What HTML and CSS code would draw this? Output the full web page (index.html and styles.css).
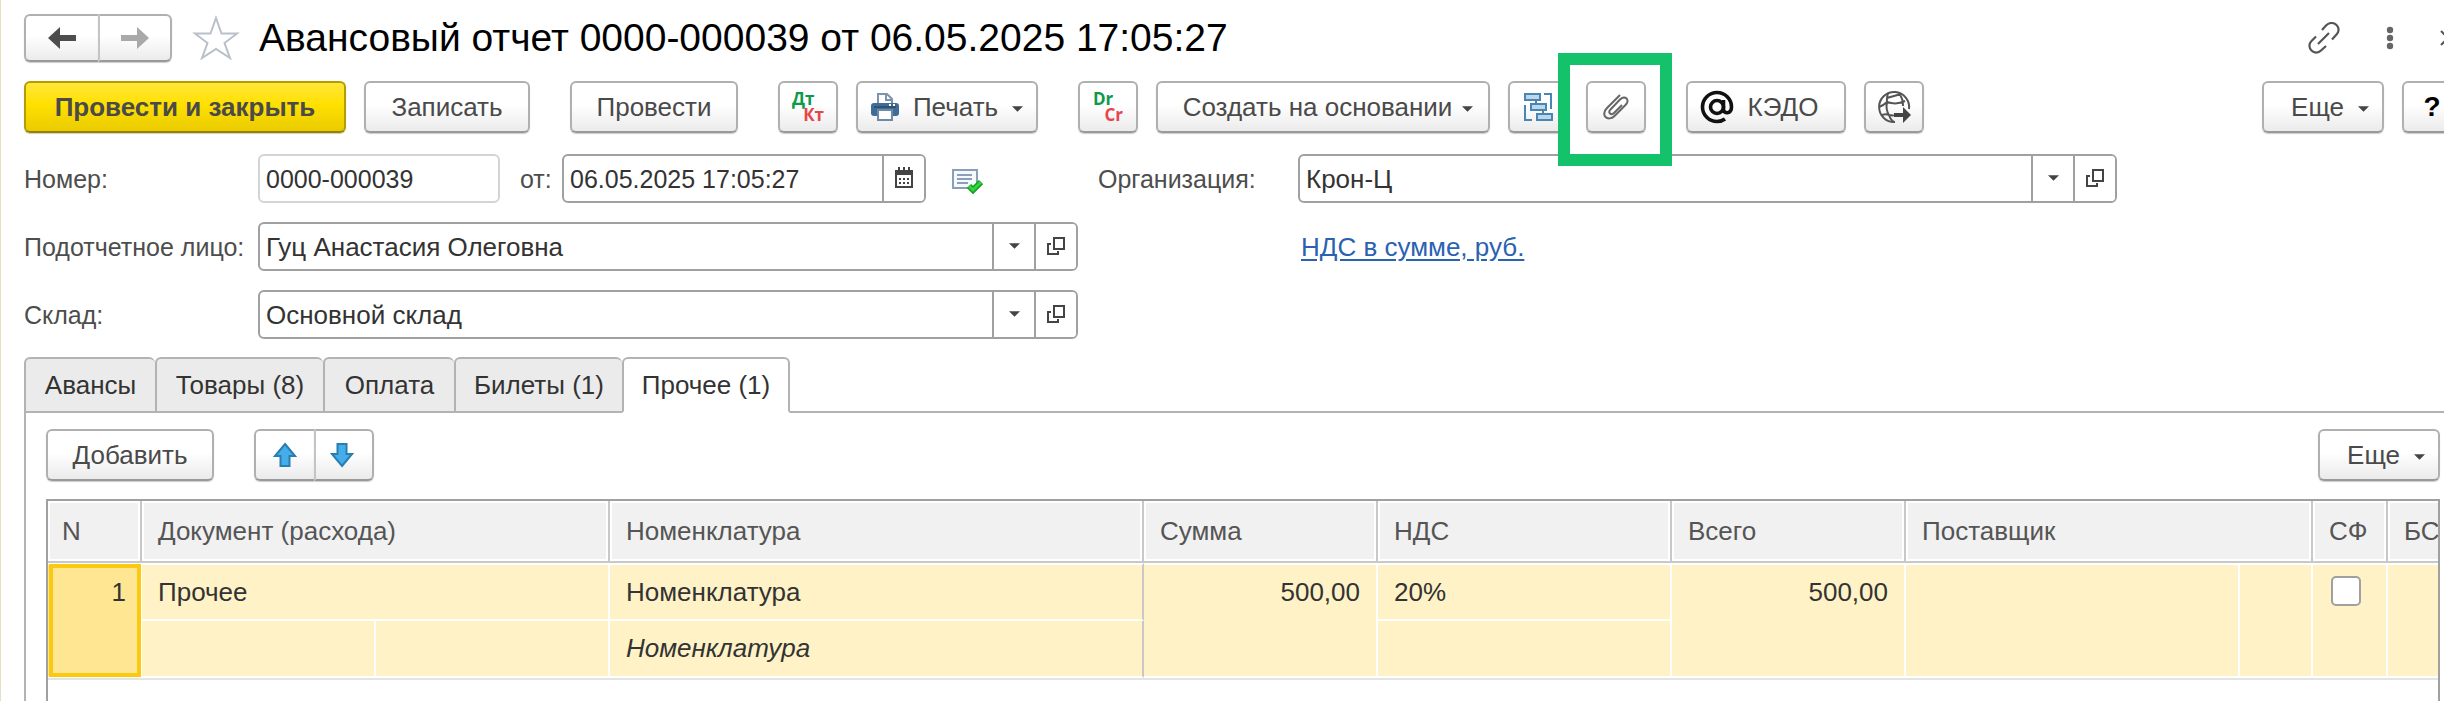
FILE: index.html
```html
<!DOCTYPE html>
<html lang="ru">
<head>
<meta charset="utf-8">
<title>Авансовый отчет</title>
<link rel="stylesheet" href="styles.css">
</head>
<body>
<svg class="defs" aria-hidden="true">
  <symbol id="open" viewBox="0 0 20 20"><path d="M8 2h10v11H8zM5 8H2v10h10v-3" fill="none" stroke="#444" stroke-width="2"/></symbol>
  <symbol id="caret" viewBox="0 0 12 6"><path d="M0 0h12L6 6z" fill="#444"/></symbol>
</svg>
<main class="window">
  <header class="titlebar">
    <div class="group nav">
      <button class="btn" aria-label="Назад"><svg width="28" height="22" viewBox="0 0 28 22"><path d="M0 11 12 0v8h16v6H12v8z" fill="#4d4d4d"/></svg></button>
      <button class="btn" aria-label="Вперед"><svg width="28" height="22" viewBox="0 0 28 22"><path d="M28 11 16 0v8H0v6h16v8z" fill="#a9a9a9"/></svg></button>
    </div>
    <button class="plain star" aria-label="Избранное"><svg width="48" height="46" viewBox="0 0 48 46"><path d="M24 3l5.500 15.500H45L32.500 28 38 43 24 34 10 43l5.500-15L3 18.500h15.500z" fill="#fff" stroke="#b9c0c8" stroke-width="2"/></svg></button>
    <h1>Авансовый отчет 0000-000039 от 06.05.2025 17:05:27</h1>
    <div class="winctl">
      <button class="plain" aria-label="Ссылка"><svg width="32" height="32" viewBox="0 0 32 32" fill="none" stroke="#555" stroke-width="2.200"><path d="M10 22 21 11M14 8l4-4.500c4-4 8.500-2.500 10.500-.500 3 3 2.500 7 0 9.500L24 17.500M8 14.500 3.500 19c-3 3-2.500 7 0 9.500s6.500 3 9.500 0L18 24"/></svg></button>
      <button class="plain" aria-label="Меню"><svg width="8" height="24" viewBox="0 0 8 24" fill="#666"><circle cx="4" cy="4" r="3.200"/><circle cx="4" cy="12" r="3.200"/><circle cx="4" cy="20" r="3.200"/></svg></button>
      <button class="plain" aria-label="Закрыть"><svg width="16" height="16" viewBox="0 0 16 16"><path d="M1 1l14 14M15 1 1 15" stroke="#555" stroke-width="2"/></svg></button>
    </div>
  </header>

  <div class="toolbar">
    <button class="btn primary">Провести и закрыть</button>
    <button class="btn write">Записать</button>
    <button class="btn post far">Провести</button>
    <button class="btn icon far"><span class="pair"><span class="dt">Дт</span><span class="kt">Кт</span></span></button>
    <button class="btn print"><svg width="28" height="28" viewBox="0 0 28 28"><path d="M7 12V1h9l5 5v6" fill="#fff" stroke="#7d93ac" stroke-width="2"/><path d="M15 1v6h6" fill="none" stroke="#7d93ac" stroke-width="2"/><rect y="10" width="28" height="13" rx="3" fill="#3f6d96"/><path d="M3 14h22" stroke="#2d5375" stroke-width="2"/><path d="M18 12h2M22 12h2" stroke="#fff" stroke-width="2"/><path d="M7 17h14v10H7z" fill="#fff" stroke="#6f8aa6" stroke-width="2"/></svg><span>Печать</span><svg class="caret" width="11" height="6"><use href="#caret"/></svg></button>
    <button class="btn icon far"><span class="pair latin"><span class="dt">Dr</span><span class="kt">Cr</span></span></button>
    <button class="btn create">Создать на основании<svg class="caret" width="11" height="6"><use href="#caret"/></svg></button>
    <button class="btn icon" aria-label="Структура подчиненности"><svg width="30" height="30" viewBox="0 0 30 30" fill="none" stroke="#4a86b4" stroke-width="2"><path d="M21 2h7v15M2 13v15h7" /><path d="M13 8v3M20 18v3"/><g fill="#bdd6e8"><path d="M2 2h15v6H2zM8 12h15v6H8zM14 22h15v6H14z"/></g></svg></button>
    <div class="marked"><button class="btn icon" aria-label="Присоединенные файлы"><svg width="26" height="28" viewBox="0 0 26 28" fill="none" stroke="#666" stroke-width="2"><path d="M17 2 4 15c-3 3-3.500 7-1.500 9s6 2 9-1L22.500 12c2.500-2.500 2.500-5 1-6.500s-4-1.500-6.500 1l-9.500 10c-1.500 1.500-1.500 3-.5 4s2.500 1 4-.5L19 12"/></svg></button></div>
    <button class="btn kedo far"><svg width="34" height="34" viewBox="0 0 34 34" fill="none" stroke="#111" stroke-width="3.600"><circle cx="17" cy="17" r="6.500"/><path d="M23.500 10v9c0 5.500 8 5 8-2A14.500 14.500 0 1 0 17 31.500c3 0 6-1 8-2.500"/></svg>КЭДО</button>
    <button class="btn icon" aria-label="Веб"><svg width="34" height="34" viewBox="0 0 34 34" fill="none" stroke="#555" stroke-width="2"><path d="M18 32A15 15 0 1 1 32 19"/><path d="M11 3c-1 4-1.500 6-1 9 6 2 12 2 18-1M2 17c3-1 6-3 8-5M10 12c-1 5 0 10 2 13 2 0 4 1 5 0M5 25c3-1 5-1 7 0M12 25c1 3 3 6 5 7M22 3c3 5 4 7 4 13M10 8 24 4"/><path d="M17 23h9v-6l8 8-8 8v-6h-9z" fill="#444" stroke="none"/></svg></button>
    <button class="btn more push">Еще<svg class="caret" width="11" height="6"><use href="#caret"/></svg></button>
    <button class="btn icon help">?</button>
  </div>

  <form class="form">
    <div class="row">
      <label class="lbl" for="num">Номер:</label>
      <div class="field num"><input id="num" value="0000-000039" readonly></div>
      <label class="from" for="date">от:</label>
      <div class="field date"><input id="date" value="06.05.2025 17:05:27"><button type="button" aria-label="Календарь"><svg width="18" height="21" viewBox="0 0 18 21"><path d="M1 4h16v16H1z" fill="#fff" stroke="#444" stroke-width="2"/><path d="M0 3h18v5H0z" fill="#444"/><path d="M4 0v4M9 0v4M14 0v4" stroke="#444" stroke-width="2"/><path d="M4 12h10M4 16h10" stroke="#444" stroke-width="2" stroke-dasharray="2 2"/></svg></button></div>
      <svg class="status" width="32" height="26" viewBox="0 0 32 26"><path d="M2 2h24v18H2z" fill="#f6f9fc" stroke="#8ba0b8" stroke-width="2"/><path d="M6 7h15M6 11h15M6 15h11" stroke="#8ba0b8" stroke-width="2"/><path d="M18 18l4 4 8-8" fill="none" stroke="#129d20" stroke-width="6"/><path d="M18 18l4 4 8-8" fill="none" stroke="#2fd53c" stroke-width="3"/></svg>
    </div>
    <div class="row">
      <label class="lbl org" for="org">Организация:</label>
      <div class="field wide"><input id="org" value="Крон-Ц"><button type="button" aria-label="Список"><svg width="11" height="6"><use href="#caret"/></svg></button><button type="button" aria-label="Открыть"><svg width="20" height="20"><use href="#open"/></svg></button></div>
    </div>
    <div class="row">
      <label class="lbl" for="person">Подотчетное лицо:</label>
      <div class="field wide"><input id="person" value="Гуц Анастасия Олеговна"><button type="button" aria-label="Список"><svg width="11" height="6"><use href="#caret"/></svg></button><button type="button" aria-label="Открыть"><svg width="20" height="20"><use href="#open"/></svg></button></div>
    </div>
    <div class="row"><a class="vat" href="#">НДС в сумме, руб.</a></div>
    <div class="row">
      <label class="lbl" for="store">Склад:</label>
      <div class="field wide"><input id="store" value="Основной склад"><button type="button" aria-label="Список"><svg width="11" height="6"><use href="#caret"/></svg></button><button type="button" aria-label="Открыть"><svg width="20" height="20"><use href="#open"/></svg></button></div>
    </div>
  </form>

  <nav class="tabs">
    <button class="t-s">Авансы</button><button class="t-l">Товары (8)</button><button class="t-s">Оплата</button><button class="t-l">Билеты (1)</button><button class="t-l active">Прочее (1)</button>
  </nav>

  <section class="panel">
    <div class="tools">
      <button class="btn add">Добавить</button>
      <div class="group move">
        <button class="btn" aria-label="Вверх"><svg width="24" height="26" viewBox="0 0 24 26"><path d="M12 2 22 14h-5.500v10h-9V14H2z" fill="#43aeea" stroke="#2a7db0" stroke-width="2"/></svg></button>
        <button class="btn" aria-label="Вниз"><svg width="24" height="26" viewBox="0 0 24 26"><path d="M12 24 22 12h-5.500V2h-9v10H2z" fill="#43aeea" stroke="#2a7db0" stroke-width="2"/></svg></button>
      </div>
      <button class="btn more push">Еще<svg class="caret" width="11" height="6"><use href="#caret"/></svg></button>
    </div>
    <div class="grid">
      <table>
        <colgroup><col class="c-n"><col class="c-sum"><col class="c-sum"><col class="c-nom"><col class="c-sum"><col class="c-vat"><col class="c-sum"><col><col class="c-sup"><col class="c-sf"><col class="c-bs"></colgroup>
        <thead>
          <tr><th>N</th><th colspan="2">Документ (расхода)</th><th>Номенклатура</th><th>Сумма</th><th>НДС</th><th>Всего</th><th colspan="2">Поставщик</th><th>СФ</th><th>БС</th></tr>
        </thead>
        <tbody>
          <tr><td rowspan="2" class="current">1</td><td colspan="2">Прочее</td><td class="ruled">Номенклатура</td><td rowspan="2" class="number">500,00</td><td>20%</td><td rowspan="2" class="number">500,00</td><td rowspan="2"></td><td rowspan="2"></td><td rowspan="2" class="check"><input type="checkbox" aria-label="СФ"></td><td rowspan="2"></td></tr>
          <tr><td></td><td></td><td class="ruled"><i>Номенклатура</i></td><td></td></tr>
        </tbody>
      </table>
    </div>
  </section>
</main>
</body>
</html>
```
FILE: styles.css
```css
* { box-sizing: border-box; }
body {
  margin: 0;
  background: #fff;
  color: #333;
  font: 26px/32px "Liberation Sans", Arial, sans-serif;
  overflow: hidden;
}
button, input { font: inherit; color: inherit; }
svg { display: block; flex: none; }
.defs { position: absolute; width: 0; height: 0; }
.window {
  display: flex;
  flex-direction: column;
  min-height: 100vh;
  padding: 14px 0 0 23px;
  border-left: 1px solid #e6dfc0;
}

.btn {
  display: flex;
  align-items: center;
  justify-content: center;
  height: 52px;
  padding: 0;
  border: 2px solid #b0b0b0;
  border-bottom-color: #999;
  border-radius: 6px;
  background: linear-gradient(#fff 45%, #ebebeb);
  box-shadow: 0 1px 1px #ccc;
  color: #4a4a4a;
  white-space: nowrap;
  flex: none;
}
.btn .caret { margin-top: 4px; }
.plain { display: flex; padding: 0; border: 0; background: none; }
.group { display: flex; }
.group .btn:first-child { border-radius: 6px 0 0 6px; border-right: 0; }
.group .btn:last-child { border-radius: 0 6px 6px 0; border-left-color: #c4c4c4; }
.push { margin-left: auto; }

.titlebar { display: flex; align-items: center; height: 48px; }
.nav .btn { width: 74px; height: 48px; }
.star { margin-left: 20px; }
h1 { margin: 0 0 0 19px; font-size: 39px; font-weight: 400; line-height: 44px; color: #000; white-space: nowrap; }
.winctl { display: flex; align-items: center; gap: 46px; margin: 0 -12px 0 auto; }

.toolbar { display: flex; gap: 18px; margin: 19px -18px 0 0; }
.far { margin-left: 22px; }
.primary {
  width: 322px;
  border-color: #b39d00;
  border-bottom-color: #958300;
  background: linear-gradient(#ffe83a, #ffe000 45%, #eacb00);
  font-weight: 700;
}
.write { width: 166px; }
.post { width: 168px; }
.icon { width: 60px; }
.print { width: 182px; gap: 14px; }
.create { width: 334px; gap: 10px; padding-left: 10px; }
.kedo { width: 160px; gap: 14px; padding-right: 14px; }
.more { width: 122px; gap: 14px; padding-left: 14px; }
.help { color: #000; font-size: 28px; font-weight: 700; }
.pair { display: flex; flex-direction: column; width: 32px; font: 700 17px/16px "Open Sans", sans-serif; }
.latin { width: 30px; }
.dt { align-self: flex-start; color: #0d9a4b; }
.kt { align-self: flex-end; color: #e8454a; }
.marked { position: relative; }
.marked::after {
  content: "";
  position: absolute;
  inset: -28px -26px -33px -28px;
  border: 12px solid #14c26b;
  pointer-events: none;
  z-index: 1;
}

.form {
  display: grid;
  grid-template-columns: 1054fr 1019fr;
  gap: 19px 20px;
  margin: 21px 327px 0 0;
}
.row { display: flex; align-items: center; height: 49px; color: #4d4d4d; }
.lbl { width: 234px; flex: none; white-space: nowrap; }
.lbl, .from { font-size: 25px; }
.org { width: 200px; }
.from { width: 62px; padding-left: 20px; }
.field { display: flex; height: 49px; border: 2px solid #a0a0a0; border-radius: 6px; overflow: hidden; color: #333; }
.field input { flex: 1; min-width: 0; padding: 0 6px; border: 0; outline: 0; background: none; }
.field button {
  display: flex;
  align-items: center;
  justify-content: center;
  width: 42px;
  padding: 0 0 2px;
  border: 0;
  border-left: 2px solid #a0a0a0;
  background: #fff;
}
.num { width: 242px; border-color: #d4d4d4; }
.date { width: 364px; }
.num, .date { font-size: 25px; }
.wide { flex: 1; }
.status { margin: 4px 0 0 25px; }
.vat { margin-left: 203px; color: #2a62b0; text-underline-offset: 3px; }

.tabs { display: flex; height: 56px; margin-top: 18px; }
.tabs button {
  padding: 0;
  border: 2px solid #b3b3b3;
  border-right-width: 0;
  border-radius: 6px 6px 0 0;
  background: #ebebeb;
}
.tabs .t-s { width: 131px; }
.tabs .t-l { width: 168px; }
.tabs .active { border-right-width: 2px; border-bottom-color: #fff; background: #fff; position: relative; }

.panel {
  display: flex;
  flex-direction: column;
  flex: 1;
  margin-top: -2px;
  padding: 16px 4px 0 20px;
  border: solid #b3b3b3;
  border-width: 2px 0 0 2px;
}
.tools { display: flex; }
.add { width: 168px; }
.move { margin-left: 40px; }
.move .btn { width: 60px; }
.move .btn:last-child { padding-right: 4px; }

.grid { flex: 1; margin-top: 18px; border: 2px solid #a0a0a0; border-bottom: 0; overflow: hidden; }
table { width: calc(100% + 26px); table-layout: fixed; border-collapse: separate; border-spacing: 0; }
.c-n { width: 94px; }
.c-sum { width: 234px; }
.c-nom { width: 534px; }
.c-vat { width: 294px; }
.c-sup { width: 73px; }
.c-sf { width: 75px; }
.c-bs { width: 76px; }
th {
  height: 62px;
  padding: 0 14px;
  border: solid #c8c8c8;
  border-width: 0 2px 2px 0;
  background: #f1f1f1;
  box-shadow: inset 0 0 0 2px #fff;
  color: #555;
  font-weight: 400;
  text-align: left;
  white-space: nowrap;
}
td {
  height: 57px;
  padding: 11px 14px;
  border: solid #fff;
  border-width: 0 2px 2px 0;
  background: #fef2c6;
  vertical-align: top;
}
tbody { color: #333; }
tbody tr:first-child td { border-top: 2px solid #fff; }
td[rowspan], tbody tr:last-child td { box-shadow: 0 2px #e4e4e4; }
th + th, td + td { padding-left: 16px; }
td.ruled { border-right-color: #c8c8c8; }
td.number, td.current { text-align: right; }
td.number { padding-right: 16px; }
td.current { background: #fee693; outline: 4px solid #fcc911; outline-offset: -5px; }
td.check { padding: 11px 0 0 18px; }
.check input {
  appearance: none;
  display: block;
  width: 30px;
  height: 30px;
  margin: 0;
  border: 2px solid #a0a0a0;
  border-radius: 5px;
  background: #fff;
}
```
